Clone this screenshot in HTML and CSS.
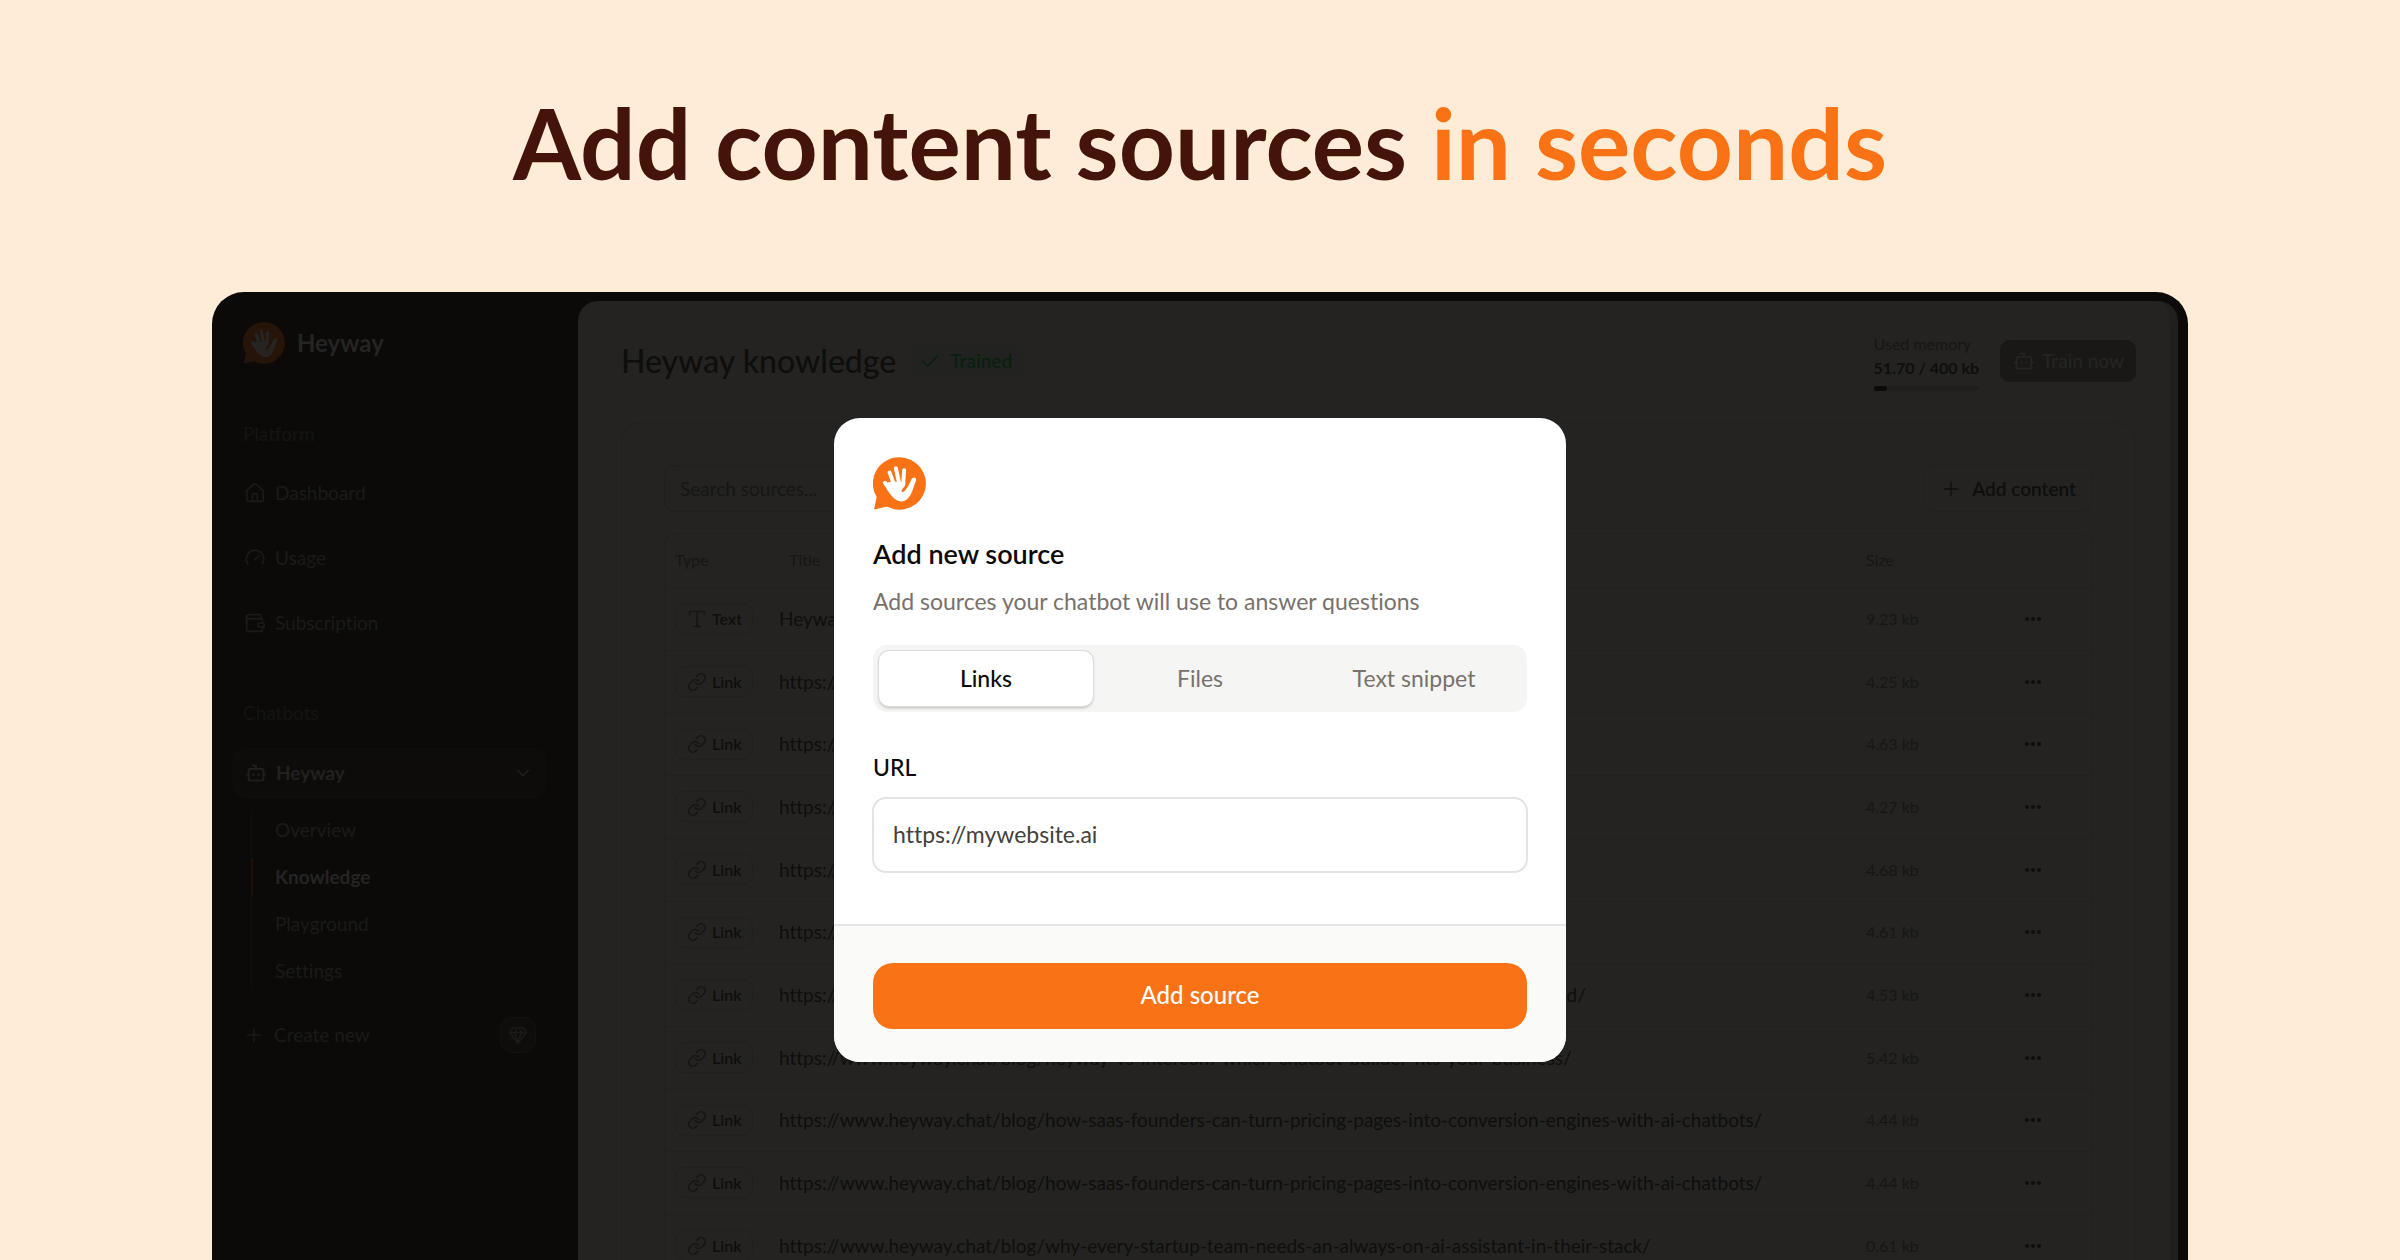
FILE: index.html
```html
<!DOCTYPE html>
<html lang="en">
<head>
<meta charset="utf-8">
<title>Heyway – Add content sources</title>
<link rel="stylesheet" href="styles.css">
</head>
<body>
<svg class="sprite" aria-hidden="true">
  <symbol id="logo" viewBox="0 0 160 160">
    <path class="logo-bubble" d="M80 1a79 79 0 1 1-36 149c-12 1-23 4-36 8-3 1-5-1-4-4l7-33A79 79 0 0 1 80 1z"/>
    <g class="logo-hand">
      <path d="M36 78l22 27M50 47l14 38M69 34l10 46M94 40l-3 42M124 68l-16 33"/>
      <path class="logo-palm" d="M32 80L58 74L97 76C101 90 87 92 86 103L90 106C98 103 106 90 118 64L130 70C120 96 114 133 86 134C62 133 48 108 32 80Z"/>
    </g>
  </symbol>
  <symbol id="home" viewBox="0 0 24 24"><path d="M15 22v-8a1 1 0 0 0-1-1h-4a1 1 0 0 0-1 1v8"/><path d="M2 10a2 2 0 0 1 .8-1.500l7-6.500a3 3 0 0 1 4.400 0l7 6.500A2 2 0 0 1 22 10v10a2 2 0 0 1-2 2H4a2 2 0 0 1-2-2z"/></symbol>
  <symbol id="gauge" viewBox="0 0 24 24"><path d="M12 14l5-5M3.300 19a10.500 10.500 0 1 1 17.400 0"/></symbol>
  <symbol id="wallet" viewBox="0 0 24 24"><path d="M19 7V3a1 1 0 0 0-1-1H4a2 2 0 0 0 0 5h16a1 1 0 0 1 1 1v4M2 4.500V20a2 2 0 0 0 2 2h16a1 1 0 0 0 1-1v-4"/><path d="M18 12a2.500 2.500 0 0 0 0 5h4a1 1 0 0 0 1-1v-3a1 1 0 0 0-1-1z"/></symbol>
  <symbol id="bot" viewBox="0 0 24 24"><path d="M12 7V3H8M2 14H1M23 14h-1M15 13v2M9 13v2"/><rect x="3" y="7" width="18" height="14" rx="2"/></symbol>
  <symbol id="chevron" viewBox="0 0 24 24"><path d="M4 8l8 8 8-8"/></symbol>
  <symbol id="plus" viewBox="0 0 24 24"><path d="M2 12h20M12 2v20"/></symbol>
  <symbol id="gem" viewBox="0 0 24 24"><path d="M6 3h12l4 6-10 13L2 9z"/><path d="M11 3L8 9l4 13 4-13-3-6M2 9h20"/></symbol>
  <symbol id="check" viewBox="0 0 24 24"><path d="M21 6L9 18l-6-6"/></symbol>
  <symbol id="type" viewBox="0 0 24 24"><path d="M12 3v18M3 7V4a1 1 0 0 1 1-1h16a1 1 0 0 1 1 1v3M8 21h8"/></symbol>
  <symbol id="link" viewBox="0 0 24 24"><path d="M10 13a5 5 0 0 0 7.540.540l3-3a5 5 0 0 0-7.070-7.070l-1.720 1.710"/><path d="M14 11a5 5 0 0 0-7.540-.540l-3 3a5 5 0 0 0 7.070 7.070l1.710-1.710"/></symbol>
  <symbol id="dots" viewBox="0 0 18 6"><circle cx="3" cy="3" r="2"/><circle cx="9" cy="3" r="2"/><circle cx="15" cy="3" r="2"/></symbol>
</svg>

<h1 class="headline">Add content sources <span class="accent">in seconds</span></h1>

<div class="window">
  <aside class="sidebar">
    <div class="brand"><svg class="brand-logo"><use href="#logo"/></svg>Heyway</div>
    <p class="group-label">Platform</p>
    <nav class="nav">
      <a class="nav-item" href="#dashboard"><svg class="icon"><use href="#home"/></svg>Dashboard</a>
      <a class="nav-item" href="#usage"><svg class="icon"><use href="#gauge"/></svg>Usage</a>
      <a class="nav-item" href="#subscription"><svg class="icon"><use href="#wallet"/></svg>Subscription</a>
    </nav>
    <p class="group-label">Chatbots</p>
    <button class="bot-toggle" type="button"><svg class="icon"><use href="#bot"/></svg><span class="grow">Heyway</span><svg class="icon-sm"><use href="#chevron"/></svg></button>
    <nav class="subnav">
      <a class="subnav-item" href="#overview">Overview</a>
      <a class="subnav-item current" href="#knowledge">Knowledge</a>
      <a class="subnav-item" href="#playground">Playground</a>
      <a class="subnav-item" href="#settings">Settings</a>
    </nav>
    <a class="create" href="#new"><svg class="icon-sm"><use href="#plus"/></svg><span class="grow">Create new</span><span class="gem"><svg class="icon"><use href="#gem"/></svg></span></a>
  </aside>

  <main class="panel">
    <header class="panel-head">
      <h2 class="panel-title">Heyway knowledge</h2>
      <span class="status"><svg class="icon"><use href="#check"/></svg>Trained</span>
      <div class="memory">
        <span>Used memory</span>
        <strong>51.70 / 400 kb</strong>
        <div class="meter"><div class="meter-fill" style="width: 13%"></div></div>
      </div>
      <button class="train" type="button"><svg class="icon"><use href="#bot"/></svg>Train now</button>
    </header>
    <section class="card">
      <div class="toolbar">
        <input class="search" type="search" placeholder="Search sources..." aria-label="Search sources">
        <button class="add" type="button"><svg class="icon-sm"><use href="#plus"/></svg>Add content</button>
      </div>
      <div class="table-wrap">
      <table class="sources">
        <colgroup><col class="col-type"><col><col class="col-size"><col class="col-menu"></colgroup>
        <thead><tr><th>Type</th><th class="th-title">Title</th><th>Size</th><th></th></tr></thead>
        <tbody>
          <tr><td><span class="tag"><svg class="icon"><use href="#type"/></svg>Text</span></td><td>Heyway</td><td>9.23 kb</td><td><button class="more" type="button" aria-label="More"><svg><use href="#dots"/></svg></button></td></tr>
          <tr><td><span class="tag"><svg class="icon"><use href="#link"/></svg>Link</span></td><td>https://www.heyway.chat/</td><td>4.25 kb</td><td><button class="more" type="button" aria-label="More"><svg><use href="#dots"/></svg></button></td></tr>
          <tr><td><span class="tag"><svg class="icon"><use href="#link"/></svg>Link</span></td><td>https://www.heyway.chat/blog/</td><td>4.63 kb</td><td><button class="more" type="button" aria-label="More"><svg><use href="#dots"/></svg></button></td></tr>
          <tr><td><span class="tag"><svg class="icon"><use href="#link"/></svg>Link</span></td><td>https://www.heyway.chat/blog/</td><td>4.27 kb</td><td><button class="more" type="button" aria-label="More"><svg><use href="#dots"/></svg></button></td></tr>
          <tr><td><span class="tag"><svg class="icon"><use href="#link"/></svg>Link</span></td><td>https://www.heyway.chat/blog/</td><td>4.68 kb</td><td><button class="more" type="button" aria-label="More"><svg><use href="#dots"/></svg></button></td></tr>
          <tr><td><span class="tag"><svg class="icon"><use href="#link"/></svg>Link</span></td><td>https://www.heyway.chat/blog/</td><td>4.61 kb</td><td><button class="more" type="button" aria-label="More"><svg><use href="#dots"/></svg></button></td></tr>
          <tr><td><span class="tag"><svg class="icon"><use href="#link"/></svg>Link</span></td><td>https://www.heyway.chat/blog/how-to-train-a-chatbot-on-your-website-content-and-go-ahead/</td><td>4.53 kb</td><td><button class="more" type="button" aria-label="More"><svg><use href="#dots"/></svg></button></td></tr>
          <tr><td><span class="tag"><svg class="icon"><use href="#link"/></svg>Link</span></td><td>https://www.heyway.chat/blog/heyway-vs-intercom-which-chatbot-builder-fits-your-business/</td><td>5.42 kb</td><td><button class="more" type="button" aria-label="More"><svg><use href="#dots"/></svg></button></td></tr>
          <tr><td><span class="tag"><svg class="icon"><use href="#link"/></svg>Link</span></td><td>https://www.heyway.chat/blog/how-saas-founders-can-turn-pricing-pages-into-conversion-engines-with-ai-chatbots/</td><td>4.44 kb</td><td><button class="more" type="button" aria-label="More"><svg><use href="#dots"/></svg></button></td></tr>
          <tr><td><span class="tag"><svg class="icon"><use href="#link"/></svg>Link</span></td><td>https://www.heyway.chat/blog/how-saas-founders-can-turn-pricing-pages-into-conversion-engines-with-ai-chatbots/</td><td>4.44 kb</td><td><button class="more" type="button" aria-label="More"><svg><use href="#dots"/></svg></button></td></tr>
          <tr><td><span class="tag"><svg class="icon"><use href="#link"/></svg>Link</span></td><td>https://www.heyway.chat/blog/why-every-startup-team-needs-an-always-on-ai-assistant-in-their-stack/</td><td>0.61 kb</td><td><button class="more" type="button" aria-label="More"><svg><use href="#dots"/></svg></button></td></tr>
        </tbody>
      </table>
      </div>
    </section>
  </main>

  <form class="modal" role="dialog" aria-labelledby="modal-title">
    <div class="modal-body">
      <svg class="modal-logo"><use href="#logo"/></svg>
      <h3 class="modal-title" id="modal-title">Add new source</h3>
      <p class="modal-text">Add sources your chatbot will use to answer questions</p>
      <div class="tabs" role="tablist">
        <button class="tab selected" type="button" role="tab" aria-selected="true">Links</button>
        <button class="tab" type="button" role="tab">Files</button>
        <button class="tab" type="button" role="tab">Text snippet</button>
      </div>
      <label class="field-label" for="url">URL</label>
      <input class="field" id="url" type="text" value="https://mywebsite.ai">
    </div>
    <div class="modal-foot"><button class="submit" type="button">Add source</button></div>
  </form>
</div>
</body>
</html>
```
FILE: styles.css
```css
* { box-sizing: border-box; }
body {
  margin: 0;
  height: 100vh;
  overflow: hidden;
  display: flex;
  flex-direction: column;
  background: #ffecd6;
  font-family: Lato, "Noto Sans", sans-serif;
  font-size: 19px;
  line-height: 24px;
  font-variant-ligatures: none;
}
h1, h2, h3, p { margin: 0; }
button, input { font: inherit; color: inherit; margin: 0; }
button { border: 0; background: none; padding: 0; }
a { color: inherit; text-decoration: none; }
svg { display: block; flex: none; fill: none; stroke: currentColor; stroke-width: 2; stroke-linecap: round; stroke-linejoin: round; }
.sprite { position: absolute; width: 0; height: 0; }
.logo-bubble { fill: var(--bubble); stroke: none; }
.logo-hand { stroke: var(--hand); stroke-width: 12; }
.logo-palm { fill: var(--hand); stroke: none; }
.icon { width: 20px; height: 20px; }
.icon-sm { width: 16px; height: 16px; }
.grow { flex: 1; text-align: left; }

.headline {
  padding: 82px 0 90px;
  color: #431407;
  font-size: 98px;
  line-height: 120px;
  font-weight: 700;
  text-align: center;
  white-space: nowrap;
}
.accent { color: #f97316; }

.window {
  position: relative;
  flex: 1;
  min-height: 0;
  margin: 0 212px;
  padding: 9px 10px 0 0;
  display: flex;
  overflow: hidden;
  border-radius: 32px 32px 0 0;
  background: #0b0a08;
}

/* Sidebar */
.sidebar { width: 366px; flex: none; padding: 21px 32px 0 21px; color: #1b1a18; }
.brand { --bubble: #261408; --hand: #252423; display: flex; align-items: center; gap: 12px; height: 42px; padding-left: 10px; color: #252423; font-size: 24px; font-weight: 700; }
.brand-logo { width: 42px; height: 42px; }
.group-label { padding: 58px 0 0 10px; color: #151412; }
.nav { display: flex; flex-direction: column; padding-top: 14px; }
.nav-item { display: flex; align-items: center; gap: 10px; height: 65px; padding-left: 12px; }
.nav + .group-label { padding-top: 46px; }
.bot-toggle { display: flex; align-items: center; gap: 10px; width: 100%; height: 50px; margin-top: 23px; padding: 0 14px 0 12px; border: 1px solid #0f0e0c; border-radius: 12px; background: #0d0c0a; color: #22211f; font-weight: 700; }
.subnav { display: flex; flex-direction: column; gap: 10px; margin: 13px 0 0 18px; border-left: 1px solid #100f0d; }
.subnav-item { height: 37px; margin-left: -1px; padding-left: 22px; border-left: 2px solid transparent; line-height: 37px; }
.subnav-item.current { border-color: #211006; color: #252423; font-weight: 700; }
.create { display: flex; align-items: center; gap: 12px; margin: 28px 10px 0 13px; }
.gem { display: grid; place-items: center; width: 36px; height: 36px; border: 1px solid #131210; border-radius: 12px; background: #0e0d0b; }

/* Main panel */
.panel { flex: 1; min-width: 0; padding: 30px 34px 0 43px; overflow: hidden; border-right: 8px solid #201f1d; border-radius: 20px 20px 0 0; background: #242321; color: #0f0e0c; }
.panel-head { display: flex; align-items: center; height: 60px; }
.panel-title { font-size: 32px; line-height: 40px; font-weight: 500; }
.status { display: flex; align-items: center; gap: 10px; height: 34px; margin-left: 14px; padding: 0 10px; border-radius: 12px; background: #222320; color: #08200f; font-weight: 600; }
.memory { display: flex; flex-direction: column; margin: 0 21px 0 auto; color: #171614; font-size: 16px; }
.memory strong { color: #0f0e0c; font-weight: 700; }
.meter { height: 5px; margin-top: 6px; border-radius: 3px; background: #201f1d; }
.meter-fill { height: 100%; border-radius: 3px; background: #0b0a08; }
.train { display: flex; align-items: center; gap: 8px; height: 42px; padding: 0 12px 0 14px; border-radius: 10px; background: #191816; color: #252422; font-weight: 500; }
.card { margin-top: 31px; padding: 42px; border: 1px solid #21201e; border-radius: 20px; }
.toolbar { display: flex; justify-content: space-between; }
.search { width: 340px; height: 47px; padding: 0 15px; border: 1px solid #201f1d; border-radius: 12px; background: transparent; outline: none; }
.search::placeholder { color: #171614; opacity: 1; }
.add { display: flex; align-items: center; gap: 13px; height: 47px; padding: 0 16px 0 19px; border: 1px solid #21201e; border-radius: 12px; font-weight: 600; }
.table-wrap { margin-top: 21px; border: 1px solid #20201e; border-radius: 12px; }
.sources { width: 100%; table-layout: fixed; border-collapse: collapse; white-space: nowrap; }
.col-type { width: 114px; }
.col-size { width: 150px; }
.col-menu { width: 86px; }
.sources th { height: 53px; padding: 0 0 0 10px; color: #171614; font-size: 16px; font-weight: 400; text-align: left; }
.sources td { height: 63px; padding: 0; border-top: 1px solid #20201e; }
.sources tr:nth-child(3n) td { height: 62px; }
.sources td:first-child { padding-left: 10px; }
.sources td:nth-child(3) { padding-left: 10px; color: #171614; font-size: 16px; }
.tag { display: inline-flex; align-items: center; gap: 5px; height: 31px; padding: 0 10px 0 11px; border: 1px solid #201f1d; border-radius: 10px; font-size: 16px; font-weight: 600; vertical-align: middle; }
.tag .icon { color: #171614; }
.more { display: block; margin-left: 18px; }
.more svg { width: 18px; height: 6px; fill: currentColor; stroke: none; }

/* Dialog */
.modal { --bubble: #f97316; --hand: #fff; position: absolute; top: 126px; left: 50%; width: 732px; margin-left: -366px; overflow: hidden; border-radius: 26px; background: #fff; color: #0c0a09; font-size: 23px; line-height: 32px; }
.modal-body { display: flex; flex-direction: column; padding: 39px 39px 51px; }
.modal-logo { width: 53px; height: 53px; }
.modal-title { margin-top: 28px; font-size: 27px; font-weight: 600; }
.modal-text { margin-top: 15px; color: #78716c; }
.tabs { display: grid; grid-template-columns: repeat(3, 1fr); margin-top: 28px; padding: 6px; border-radius: 14px; background: #f5f5f4; }
.tab { height: 55px; padding-bottom: 2px; border-radius: 10px; color: #78716c; }
.tab.selected { background: #fff; box-shadow: 0 0 0 1px #dcdcdb, 0 2px 3px #bbb; color: #0c0a09; font-weight: 500; }
.field-label { margin-top: 39px; font-weight: 500; }
.field { height: 76px; margin: 14px -1px 0; padding: 0 19px 2px; border: 2px solid #e4e4e3; border-radius: 14px; background: #fff; color: #44403c; outline: none; }
.modal-foot { padding: 37px 39px 33px; border-top: 2px solid #e7e5e4; background: #fafaf9; }
.submit { display: block; width: 100%; height: 66px; padding-bottom: 2px; border-radius: 20px; background: #f97316; color: #fff; font-size: 24px; font-weight: 500; }
```
